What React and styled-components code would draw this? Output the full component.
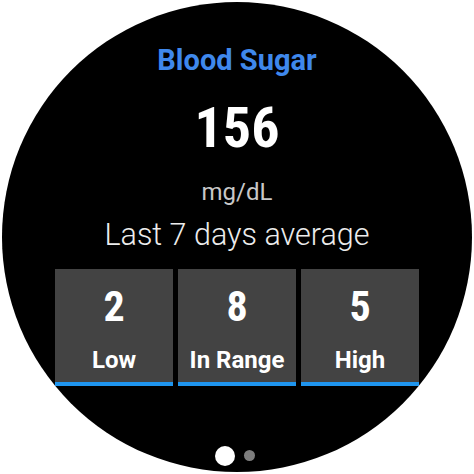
import React from "react";
import styled, { createGlobalStyle } from "styled-components";

const Global = createGlobalStyle`
  html, body { margin: 0; padding: 0; background: #ffffff; }
  body { font-family: Roboto, "Liberation Sans", sans-serif; }
`;

const Screen = styled.div`
  width: 474px;
  height: 474px;
  display: flex;
  align-items: center;
  justify-content: center;
`;

const Watch = styled.div`
  width: 470px;
  height: 470px;
  border-radius: 50%;
  background: #000;
  display: flex;
  flex-direction: column;
  align-items: center;
  padding-top: 44px;
  box-sizing: border-box;
  overflow: hidden;
`;

const Title = styled.div`
  font-family: Roboto, sans-serif;
  font-size: 29px;
  line-height: 29px;
  font-weight: 700;
  color: #3f88ec;
`;

const Value = styled.div`
  margin-top: 24.5px;
  font-family: "Roboto Condensed", Roboto, sans-serif;
  font-size: 56px;
  line-height: 56px;
  font-weight: 700;
  color: #fff;
`;

const Unit = styled.div`
  margin-top: 24px;
  font-family: Roboto, sans-serif;
  font-size: 24px;
  line-height: 24px;
  font-weight: 400;
  color: #c8c8c8;
`;

const Caption = styled.div`
  margin-top: 16.6px;
  font-family: Roboto, sans-serif;
  font-size: 30.5px;
  line-height: 30.5px;
  font-weight: 300;
  color: #ececec;
`;

const Tiles = styled.div`
  margin-top: 18px;
  display: grid;
  grid-template-columns: repeat(3, 118px);
  gap: 5px;
`;

const Tile = styled.div`
  height: 117px;
  box-sizing: border-box;
  background: #434343;
  border-bottom: 4px solid #1f95ee;
  display: flex;
  flex-direction: column;
  align-items: center;
  padding-top: 17.5px;
`;

const TileValue = styled.div`
  font-family: "Roboto Condensed", Roboto, sans-serif;
  font-size: 42px;
  line-height: 42px;
  font-weight: 700;
  color: #fff;
`;

const TileLabel = styled.div`
  margin-top: 20px;
  font-family: Roboto, sans-serif;
  font-size: 24px;
  line-height: 24px;
  font-weight: 700;
  color: #fff;
`;

const Dots = styled.div`
  margin-top: 60px;
  display: flex;
  align-items: center;
  gap: 8.5px;
  transform: translateX(-2px);
`;

const Dot = styled.div`
  width: ${(p) => (p.$active ? 20 : 11)}px;
  height: ${(p) => (p.$active ? 20 : 11)}px;
  border-radius: 50%;
  background: ${(p) => (p.$active ? "#fff" : "#7d7d7d")};
`;

const stats = [
  { value: 2, label: "Low" },
  { value: 8, label: "In Range" },
  { value: 5, label: "High" },
];

export default function App() {
  return (
    <>
      <Global />
      <Screen>
        <Watch>
          <Title>Blood Sugar</Title>
          <Value>156</Value>
          <Unit>mg/dL</Unit>
          <Caption>Last 7 days average</Caption>
          <Tiles>
            {stats.map((s) => (
              <Tile key={s.label}>
                <TileValue>{s.value}</TileValue>
                <TileLabel>{s.label}</TileLabel>
              </Tile>
            ))}
          </Tiles>
          <Dots>
            <Dot $active />
            <Dot />
          </Dots>
        </Watch>
      </Screen>
    </>
  );
}
